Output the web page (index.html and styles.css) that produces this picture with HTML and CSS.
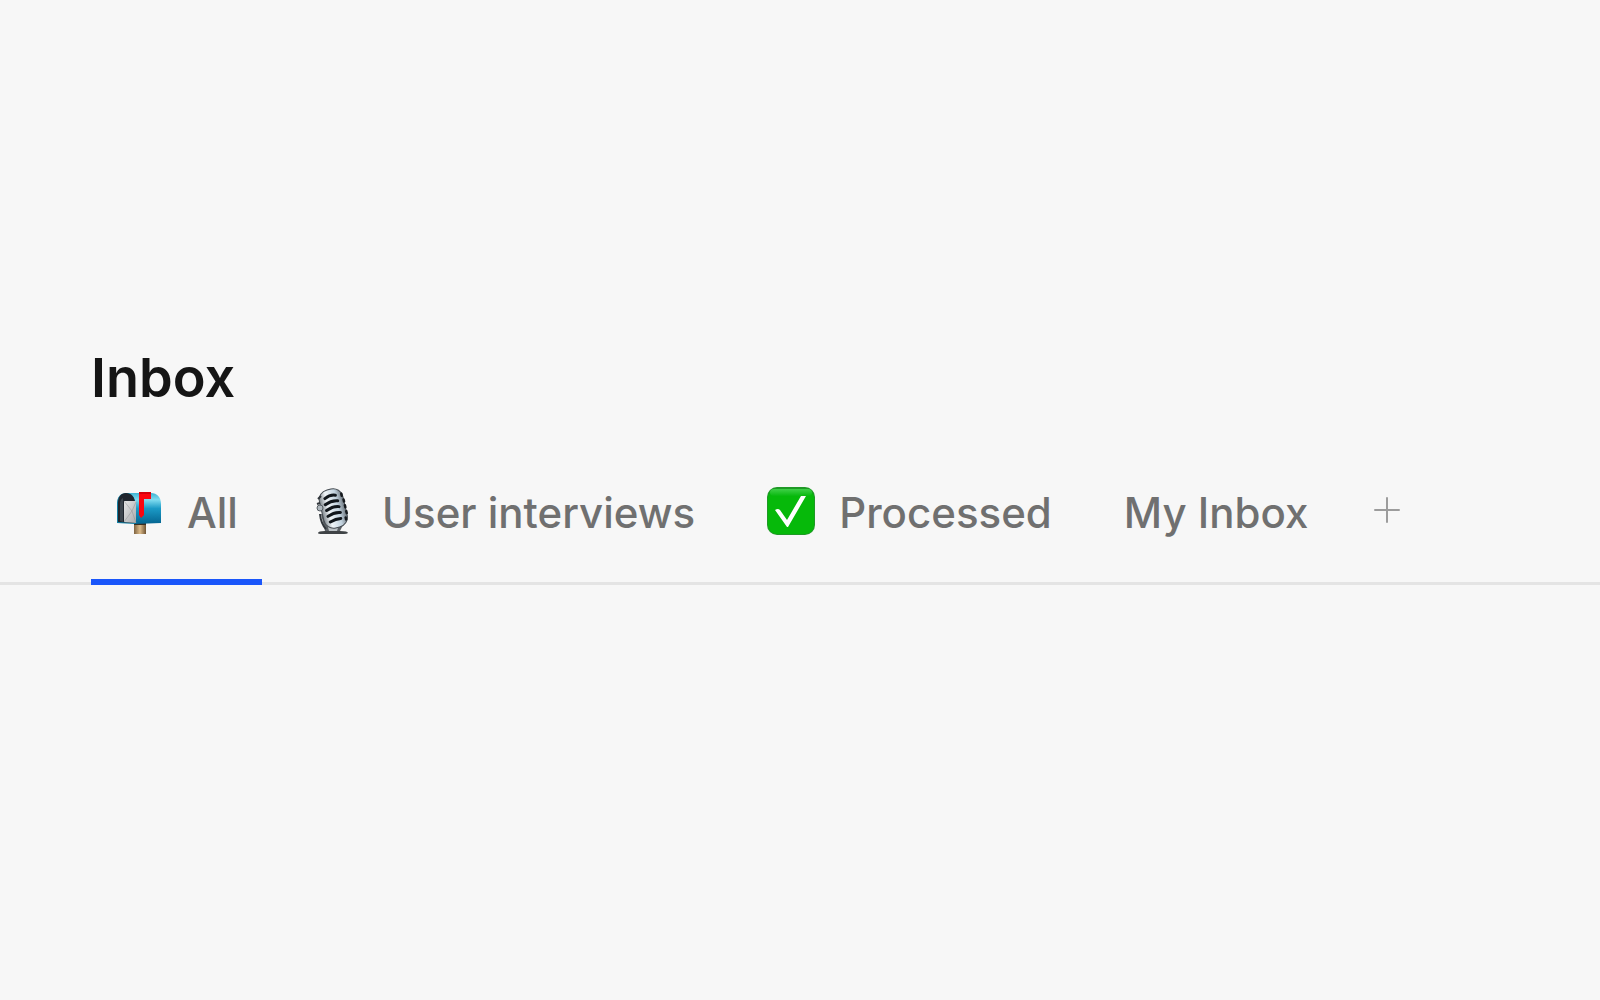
FILE: index.html
```
<!doctype html>
<html lang="en">
<head>
<title>Inbox</title>
<meta charset="utf-8">
<meta name="viewport" content="width=device-width, initial-scale=1.0">
<link rel="stylesheet" href="styles.css">
</head>
<body>
    <header>
        <h1>Inbox</h1>
        <nav class="tabs">
            <a class="tab active" href="#all">
                <svg class="icon" viewBox="0 0 48 48" aria-hidden="true">
                    <defs>
                        <linearGradient id="boxBody" x1="0" y1="0" x2="0" y2="1">
                            <stop offset="0" stop-color="#41b4d2"/>
                            <stop offset=".22" stop-color="#7fdcf0"/>
                            <stop offset=".5" stop-color="#1b9ac6"/>
                            <stop offset="1" stop-color="#046490"/>
                        </linearGradient>
                        <linearGradient id="boxPost" x1="0" y1="0" x2="1" y2="0">
                            <stop offset="0" stop-color="#7d6240"/>
                            <stop offset=".5" stop-color="#dcbb8a"/>
                            <stop offset="1" stop-color="#6e5333"/>
                        </linearGradient>
                        <linearGradient id="boxLetter" x1="0" y1="0" x2="1" y2="1">
                            <stop offset="0" stop-color="#e6e6e6"/>
                            <stop offset="1" stop-color="#a9abad"/>
                        </linearGradient>
                    </defs>
                    <path d="M19 35h12v12H19z" fill="url(#boxPost)"/>
                    <path d="M19 36h12v2H19z" fill="#3a2f23"/>
                    <path d="M11 6h25c6 0 10 4 10 11v19l-26 1V16z" fill="url(#boxBody)"/>
                    <path d="M2 36V16C2 10 6 6 11 6s9 4 9 10v21z" fill="#137fa3"/>
                    <path d="M3 35V16c0-6 3-10 8-10s9 4 9 10v20z" fill="#20262e"/>
                    <path d="M5 34V17c0-3 1-5 3-6v24z" fill="#3d454d"/>
                    <path d="M9 14h12v22l-12-1z" fill="url(#boxLetter)"/>
                    <path d="M9 14l8 10-8 11M21 15l-4 9 4 12" fill="none" stroke="#8d9092" stroke-opacity=".6" stroke-width=".8"/>
                    <path d="M24 5v23l2 3 3-3V12h7V5z" fill="#fa0610"/>
                    <path d="M24 5h12v2H24z" fill="#d4000c"/>
                </svg>
                <span>All</span>
            </a>
            <a class="tab" href="#interviews">
                <svg class="icon" viewBox="0 0 48 48" aria-hidden="true">
                    <defs>
                        <linearGradient id="micBody" x1="0" y1="0" x2="1" y2="0">
                            <stop offset="0" stop-color="#7d848a"/>
                            <stop offset=".3" stop-color="#f0f5f8"/>
                            <stop offset=".7" stop-color="#c3d3df"/>
                            <stop offset="1" stop-color="#6b747c"/>
                        </linearGradient>
                    </defs>
                    <path d="M11 27l4 17h15l5-10-5-6z" fill="#5b6065"/>
                    <path d="M16 33l3 11h8l3-10z" fill="#bcc2c6"/>
                    <path d="M8 46q0-2 7-2h15q8 0 8 2-1 1-4 1H12q-4 0-4-1z" fill="#3f4346"/>
                    <g transform="rotate(-13 23 20)">
                        <rect x="11" y="2" width="24" height="39" rx="10" fill="url(#micBody)" stroke="#444a50"/>
                        <path d="M17 10q6-3 11-1M16 16q7-3 13-1M16 22q7-3 13-1M16 28q7-3 13-1M17 34q6-2 11-1" fill="none" stroke="#11161b" stroke-width="3" stroke-linecap="round"/>
                        <path d="M34 9v2M35 15v2M35 21v2M35 27v2M33 33v2" fill="none" stroke="#15191d" stroke-width="2.5" stroke-linecap="round"/>
                    </g>
                    <path d="M8 12l3-3M7 17l3-1M10 27q1 10 6 15" fill="none" stroke="#30353a" stroke-width="2"/>
                    <circle cx="10" cy="21" r="3" fill="#aeb6bc" stroke="#555c62"/>
                </svg>
                <span>User interviews</span>
            </a>
            <a class="tab" href="#processed">
                <svg class="icon" viewBox="0 0 48 48" aria-hidden="true">
                    <defs>
                        <linearGradient id="checkShine" x1="0" y1="0" x2="0" y2="1">
                            <stop offset="0" stop-color="#3fd048"/>
                            <stop offset="1" stop-color="#08b90e"/>
                        </linearGradient>
                    </defs>
                    <rect width="48" height="48" rx="10" fill="#1f9a26"/>
                    <rect x="1" y="2" width="46" height="45" rx="9" fill="#06b90a"/>
                    <rect x="3" y="2" width="42" height="7" rx="4" fill="url(#checkShine)"/>
                    <path d="M8 23q3-2 5 0l7 10L34 9h5L21 40h-1z" fill="#fff"/>
                </svg>
                <span>Processed</span>
            </a>
            <a class="tab" href="#my-inbox">
                <span>My Inbox</span>
            </a>
            <button class="add" type="button" aria-label="Add view">
                <svg viewBox="0 0 26 26" aria-hidden="true">
                    <path d="M13 1v24M1 13h24" fill="none" stroke="#9c9c9c" stroke-width="2" stroke-linecap="round"/>
                </svg>
            </button>
        </nav>
    </header>
</body>
</html>
```
FILE: styles.css
```
*{
    margin: 0;
    padding: 0;
    box-sizing: border-box;
}
body{
    font-family: Inter, "Liberation Sans", sans-serif;
    background: #f7f7f7;
}
header{
    padding-top: 346px;
}
h1{
    padding: 0 91px;
    font-size: 54px;
    font-weight: 600;
    line-height: 64px;
    color: #151515;
}
.tabs{
    display: flex;
    align-items: flex-start;
    gap: 24px;
    margin-top: 77px;
    padding: 0 91px;
    box-shadow: inset 0 -3px #e4e4e4;
}
.tab{
    display: flex;
    gap: 24px;
    padding: 0 24px 40px;
    border-bottom: 6px solid transparent;
    font-size: 42px;
    font-weight: 500;
    line-height: 52px;
    color: #707070;
    text-decoration: none;
    white-space: nowrap;
}
.tab.active{
    border-color: #1a56fa;
}
.icon{
    flex: none;
    width: 48px;
    height: 48px;
}
.add{
    display: flex;
    align-items: center;
    justify-content: center;
    width: 62px;
    height: 46px;
    border: 0;
    background: none;
    cursor: pointer;
}
.add svg{
    width: 26px;
    height: 26px;
}
```
